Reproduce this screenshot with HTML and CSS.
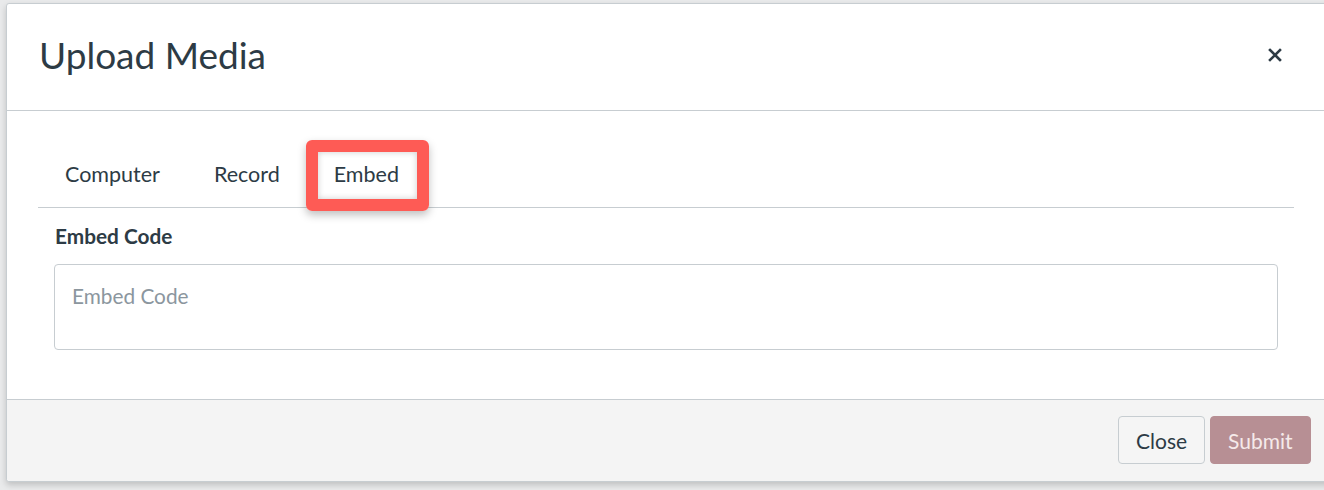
FILE: index.html
```html
<!DOCTYPE html>
<html lang="en">
<head>
  <meta charset="UTF-8">
  <title>Upload Media</title>
  <link rel="stylesheet" href="styles.css">
</head>
<body>
  <div class="modal">
    <div class="modal-header">
      <h2>Upload Media</h2>
      <button class="btn-x" aria-label="Close">
        <svg width="14" height="14" viewBox="0 0 14 14"><path d="M2 2 L12 12 M12 2 L2 12" stroke="#2d3b45" stroke-width="2.6" stroke-linecap="square"/></svg>
      </button>
    </div>

    <div class="modal-body">
      <div class="tabs">
        <span class="tab">Computer</span>
        <span class="tab">Record</span>
        <span class="tab tab-ativa">Embed</span>
      </div>

      <label class="rotulo" for="codigo">Embed Code</label>
      <textarea id="codigo" placeholder="Embed Code"></textarea>
    </div>

    <div class="modal-footer">
      <button class="btn">Close</button>
      <button class="btn btn-submit">Submit</button>
    </div>
  </div>
</body>
</html>
```

FILE: styles.css
```css
body {
  margin: 0;
  padding: 3px 0 0 6px;
  background-color: #e9eaeb;
  font-family: Lato, "Open Sans", sans-serif;
  color: #2d3b45;
  overflow: hidden;
  height: 490px;
  box-sizing: border-box;
}

.modal {
  width: 1340px;
  background: #fff;
  border: 1px solid #c7cdd1;
  border-radius: 3px;
  box-shadow: 0 3px 6px rgba(0, 0, 0, 0.18);
}

.modal-header {
  display: flex;
  align-items: center;
  justify-content: space-between;
  height: 106px;
  padding: 0 0 0 32px;
  border-bottom: 1px solid #c7cdd1;
}

.modal-header h2 {
  margin: 0;
  font-size: 37px;
  font-weight: 400;
  padding-bottom: 6px;
}

.btn-x {
  background: none;
  border: none;
  margin-right: 65px;
  padding: 0;
  display: flex;
  margin-bottom: 4px;
}

.modal-body {
  padding: 29px 53px 49px 31px;
}

.tabs {
  display: flex;
  border-bottom: 1px solid #c7cdd1;
  padding-left: 27px;
  height: 67px;
}

.tab {
  font-size: 21.5px;
  padding: 21px 0 0;
  margin-right: 54px;
}

.tab-ativa {
  position: relative;
}

.tab-ativa::before {
  content: "";
  position: absolute;
  left: -28px;
  right: -30px;
  top: 0;
  bottom: -4px;
  border: 12px solid #fe5b55;
  border-radius: 6px;
  box-shadow: 0 4px 8px rgba(0, 0, 0, 0.25), inset 0 0 6px rgba(0, 0, 0, 0.2);
}

.rotulo {
  display: block;
  font-size: 20.8px;
  font-weight: 700;
  margin: 15px 0 16px 17px;
}

textarea {
  display: block;
  margin-left: 16px;
  width: 1224px;
  height: 86px;
  box-sizing: border-box;
  border: 1px solid #c7cdd1;
  border-radius: 4px;
  padding: 18px 17px;
  font-family: Lato, sans-serif;
  font-size: 20.8px;
  resize: none;
  outline: none;
}

textarea::placeholder {
  color: #8b969e;
}

.modal-footer {
  display: flex;
  gap: 5px;
  padding: 16px 0 17px 1111px;
  background: #f4f4f4;
  border-top: 1px solid #c7cdd1;
  border-radius: 0 0 3px 3px;
}

.btn {
  font-family: Lato, sans-serif;
  font-size: 21px;
  color: #2d3b45;
  background: #f5f5f5;
  border: 1px solid #c7cdd1;
  border-radius: 4px;
  height: 48px;
  padding: 0 17px;
}

.btn-submit {
  background: #b78f94;
  border-color: #b78f94;
  color: #f5eaea;
}
```
